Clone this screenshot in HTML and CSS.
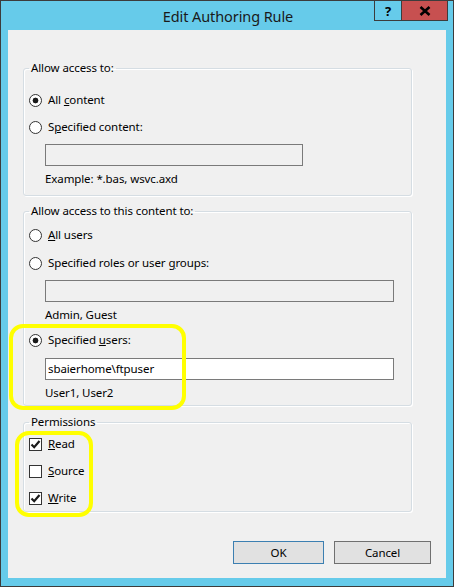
FILE: index.html
```html
<!DOCTYPE html>
<html lang="en">
<head>
    <meta charset="UTF-8">
    <title>Edit Authoring Rule</title>
    <link rel="stylesheet" href="styles.css">
</head>
<body>
    <div class="window">
        <div class="titlebar">
            <span></span>
            <div class="title">Edit Authoring Rule</div>
            <div class="caption">
                <span class="cap-btn help">?</span>
                <span class="cap-btn close">
                    <svg width="12" height="10" viewBox="0 0 12 10"><path d="M1.5 1 L10.5 9 M10.5 1 L1.5 9" stroke="#000" stroke-width="2.6" fill="none"/></svg>
                </span>
            </div>
        </div>
        <div class="client">
            <!-- allow access to -->
            <fieldset class="group group-content">
                <legend>Allow access to:</legend>
                <div class="option first"><span class="radio on"></span><span>All <u>c</u>ontent</span></div>
                <div class="option"><span class="radio"></span><span>S<u>p</u>ecified content:</span></div>
                <div class="textbox short"></div>
                <div class="hint">Example: *.bas, wsvc.axd</div>
            </fieldset>

            <!-- allow access to this content to -->
            <fieldset class="group group-users">
                <legend>Allow access to this content to:</legend>
                <div class="option first"><span class="radio"></span><span><u>A</u>ll users</span></div>
                <div class="option roles"><span class="radio"></span><span>Specified roles or user <u>g</u>roups:</span></div>
                <div class="textbox"></div>
                <div class="hint">Admin, Guest</div>
                <div class="option named"><span class="radio on"></span><span>Specified <u>u</u>sers:</span></div>
                <div class="textbox filled">sbaierhome\ftpuser</div>
                <div class="hint">User1, User2</div>
            </fieldset>

            <!-- permissions -->
            <fieldset class="group group-perms">
                <legend>Permissions</legend>
                <div class="option first"><span class="check on"><svg width="11" height="11" viewBox="0 0 11 11"><path d="M1.5 5.5 L4.2 8.2 L9.5 2" stroke="#1a1a1a" stroke-width="2.2" fill="none"/></svg></span><span><u>R</u>ead</span></div>
                <div class="option"><span class="check"></span><span><u>S</u>ource</span></div>
                <div class="option"><span class="check on"><svg width="11" height="11" viewBox="0 0 11 11"><path d="M1.5 5.5 L4.2 8.2 L9.5 2" stroke="#1a1a1a" stroke-width="2.2" fill="none"/></svg></span><span><u>W</u>rite</span></div>
            </fieldset>

            <div class="actions">
                <button class="btn ok">OK</button>
                <button class="btn cancel">Cancel</button>
            </div>

            <!-- yellow highlights drawn over the dialog -->
            <div class="mark mark-users"></div>
            <div class="mark mark-perms"></div>
        </div>
    </div>
</body>
</html>
```

FILE: styles.css
```css
*{
    margin: 0;
    padding: 0;
    box-sizing: border-box;
}
body{
    width: 454px;
    height: 587px;
    font-family: "Noto Sans", "Open Sans", sans-serif;
    font-size: 11.5px;
    letter-spacing: -0.1px;
    color: #000;
    background-color: #fff;
}
.window{
    width: 454px;
    height: 587px;
    border: 1px solid #3c3c3c;
    background-color: #66cbea;
    padding: 0 7px 8px 7px;
    display: flex;
    flex-direction: column;
}
.titlebar{
    height: 29px;
    display: grid;
    grid-template-columns: 1fr auto 1fr;
    margin-right: -2px;
}
.title{
    font-size: 14.5px;
    letter-spacing: -0.1px;
    line-height: 29px;
    color: #1a1a1a;
    padding-top: 1px;
}
.caption{
    justify-self: end;
    align-self: start;
    display: flex;
    height: 20px;
    border: 1px solid #3c3c3c;
    border-top: none;
}
.cap-btn{
    display: flex;
    align-items: center;
    justify-content: center;
    height: 19px;
}
.help{
    width: 27px;
    font-weight: bold;
    font-size: 13px;
    border-right: 1px solid #3c3c3c;
}
.close{
    width: 45px;
    background-color: #c75050;
}
.client{
    position: relative;
    flex: 1;
    background-color: #f0f0f0;
    padding: 30px 15px 0 15px;
    display: flex;
    flex-direction: column;
}
.group{
    width: 389px;
    border: 1px solid #d5dde3;
    border-radius: 3px;
    box-shadow: 1px 1px 0 #fff, inset 1px 1px 0 #fff;
    padding: 0 5px;
    min-inline-size: 0;
}
.group legend{
    padding: 0 2px;
    line-height: 16px;
    height: 16px;
}
.group-content{
    padding-bottom: 8px;
}
.group-users{
    margin-top: 7px;
    padding-bottom: 4px;
}
.group-perms{
    margin-top: 8px;
    padding-bottom: 5px;
}
.option{
    display: flex;
    align-items: center;
    gap: 6px;
    height: 16px;
    line-height: 16px;
    margin-top: 11px;
}
.group-content .first{
    margin-top: 16px;
}
.group-users .first{
    margin-top: 8px;
}
.group-users .roles{
    margin-top: 12px;
}
.group-users .named{
    margin-top: 9px;
}
.group-perms .first{
    margin-top: 6px;
}
.radio{
    width: 13px;
    height: 13px;
    border: 1px solid #333;
    border-radius: 50%;
    background-color: #fff;
}
.radio.on{
    background: radial-gradient(circle, #1a1a1a 0, #1a1a1a 2.6px, #fff 3.2px);
}
.check{
    width: 13px;
    height: 13px;
    border: 1px solid #333;
    background-color: #fff;
    display: flex;
    align-items: center;
    justify-content: center;
}
.textbox{
    width: 349px;
    height: 22px;
    margin: 9px 0 0 16px;
    border: 1px solid #7a7a7a;
    background-color: #f0f0f0;
    padding-left: 2px;
    line-height: 20px;
}
.textbox.short{
    width: 258px;
}
.textbox.filled{
    background-color: #fff;
    margin-top: 10px;
}
.hint{
    margin: 5px 0 0 16px;
    height: 16px;
    line-height: 16px;
}
.actions{
    display: flex;
    justify-content: flex-end;
    gap: 10px;
    margin-top: 29px;
}
.btn{
    height: 23px;
    font-family: inherit;
    font-size: 11.5px;
    letter-spacing: -0.1px;
    color: #000;
    background-color: #e1e1e1;
    border: 1px solid #adadad;
}
.ok{
    width: 91px;
    border: 1px solid #3c7fb1;
}
.cancel{
    width: 97px;
    border: 1px solid #707070;
}
.mark{
    position: absolute;
    border: 4px solid #ffff00;
    border-radius: 14px;
}
.mark-users{
    left: 1px;
    top: 294px;
    width: 177px;
    height: 86px;
}
.mark-perms{
    left: 7px;
    top: 401px;
    width: 78px;
    height: 86px;
}
```
